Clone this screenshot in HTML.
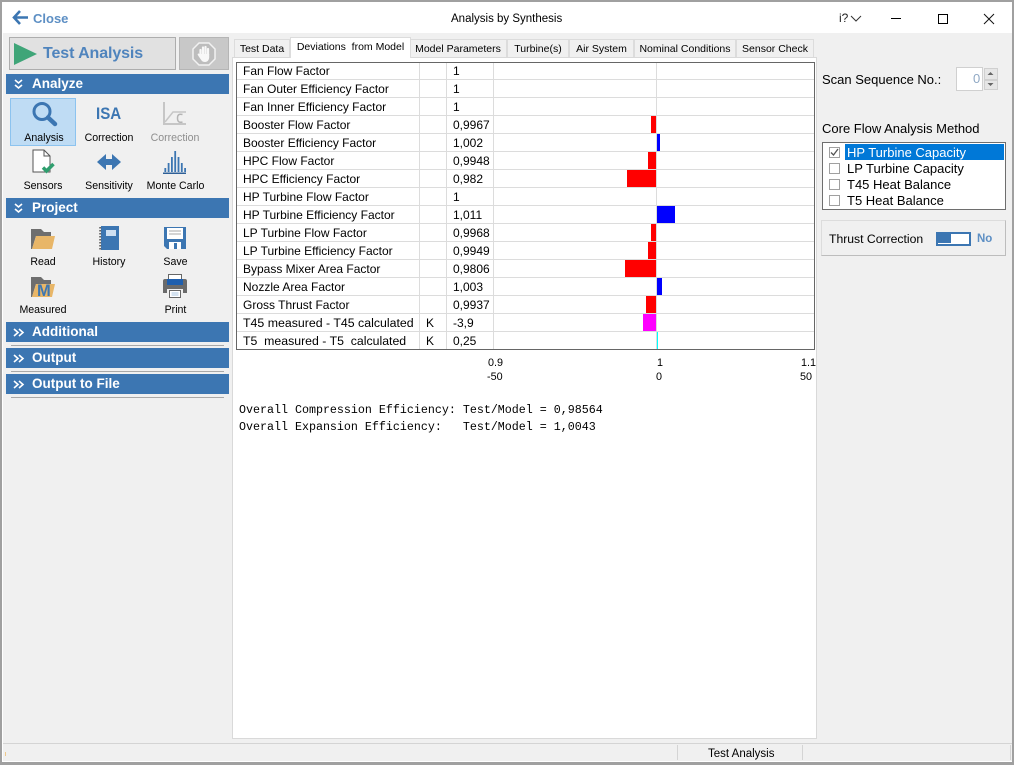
<!DOCTYPE html>
<html><head><meta charset="utf-8"><title>Analysis by Synthesis</title>
<style>
html,body{margin:0;padding:0;width:1014px;height:765px;overflow:hidden;background:#f0f0f0;font-family:"Liberation Sans",sans-serif;font-size:12px;color:#000}
.a,.t,.r,.b,.h,.c,svg{position:absolute}
.a{display:block}
.t{white-space:nowrap;line-height:14px}
.c{white-space:nowrap;line-height:14px;text-align:center;font-size:10.6px}
.h{left:6px;width:223px;height:20px;background:#3c76b2;color:#fff;font-weight:bold;font-size:13.5px;line-height:20px}
.h span{position:absolute;left:26px;top:0}
.h svg{left:7px;top:5px}
.tab{position:absolute;top:39px;height:18px;background:#f0f0f0;border:1px solid #dcdcdc;border-bottom:none;box-sizing:border-box;text-align:center;line-height:18px;font-size:10.5px;white-space:nowrap}
.rl{position:absolute;left:237px;width:577px;height:1px;background:#dcdcdc}
.cl{position:absolute;top:63px;height:286px;width:1px;background:#dcdcdc}
.tx{position:absolute;left:243px;white-space:nowrap;line-height:14px;font-size:12px}
.v{position:absolute;left:453px;white-space:nowrap;line-height:14px;font-size:12px}
.b{height:17px}
.chk{position:absolute;left:829px;width:9px;height:9px;border:1px solid #a0a0a0;background:#fff}
.m{position:absolute;left:239px;font:11.67px/17px "Liberation Mono",monospace;white-space:pre}
.ax{font-size:10.8px}
.l13{font-size:13px}
</style></head><body>
<!-- window -->
<div class="a" style="left:0;top:0;width:1014px;height:765px;box-sizing:border-box;border:2px solid #a0a0a0;border-bottom-width:3px;border-right-width:2px"></div>
<div class="a" style="left:2px;top:2px;width:1010px;height:31px;background:#fff"></div>
<div class="a" style="left:2px;top:33px;width:1px;height:728px;background:#fff"></div>
<div class="a" style="left:2px;top:761px;width:1010px;height:1px;background:#fff"></div>

<!-- title -->
<svg style="left:12px;top:10px" width="17" height="15" viewBox="0 0 17 15"><path d="M8 1L2 7.5L8 14M2 7.5H16" fill="none" stroke="#3c76b2" stroke-width="2.6"/></svg>
<div class="t" style="left:33px;top:12px;font-size:13px;font-weight:bold;color:#5d8fc4">Close</div>
<div class="t" style="left:451px;top:12px;font-size:11.5px">Analysis by Synthesis</div>
<div class="t" style="left:839px;top:11px;font-size:12px;color:#222">i?</div>
<svg style="left:850px;top:15px" width="12" height="8"><path d="M1 1L6 6L11 1" fill="none" stroke="#333" stroke-width="1"/></svg>
<div class="a" style="left:891px;top:18px;width:10px;height:1px;background:#000"></div>
<div class="a" style="left:938px;top:14px;width:8px;height:8px;border:1.3px solid #000"></div>
<svg style="left:983px;top:13px" width="12" height="12"><path d="M1 1L11 11M11 1L1 11" fill="none" stroke="#111" stroke-width="1"/></svg>

<!-- run buttons -->
<div class="a" style="left:9px;top:37px;width:165px;height:31px;background:#e1e1e1;border:1px solid #adadad"></div>
<svg style="left:14px;top:43px" width="24" height="22"><path d="M0 0L23 11L0 22Z" fill="#3fa578"/></svg>
<div class="t" style="left:43px;top:45px;font-size:16px;line-height:18px;font-weight:bold;color:#4f84bd;letter-spacing:-.1px">Test Analysis</div>
<div class="a" style="left:179px;top:37px;width:48px;height:31px;background:#c8c8c8;border:1px solid #b5b5b5"></div>
<svg style="left:192px;top:42px" width="24" height="24" viewBox="0 0 24 24"><path d="M7 1H17L23 7V17L17 23H7L1 17V7Z" fill="#bdbdbd" stroke="#f2f2f2" stroke-width="1.5"/><path d="M8.500 13V8M11 12V5.500M13.500 12V5M16 12.500V7" stroke="#f8f8f8" stroke-width="2.200" stroke-linecap="round" fill="none"/><path d="M7.500 12H17.200V15C17.200 18 15.500 20 13 20C10.500 20 9.500 18.500 8.500 17L5.800 13C5.200 12 6.500 10.800 7.500 12Z" fill="#f8f8f8"/></svg>

<!-- Analyze -->
<div class="h" style="top:74px"><svg width="12" height="11" viewBox="0 0 12 11"><path d="M2 1L5.500 4L9 1M2 6L5.500 9L9 6" fill="none" stroke="#fff" stroke-width="1.6"/></svg><span>Analyze</span></div>
<div class="a" style="left:10px;top:98px;width:64px;height:46px;background:#bfdcf4;border:1px solid #8cc3ef"></div>
<svg style="left:30px;top:100px" width="30" height="28" viewBox="0 0 30 28"><circle cx="12" cy="11.500" r="8" fill="none" stroke="#3c76b2" stroke-width="3"/><path d="M18 17.500L25 24" stroke="#3c76b2" stroke-width="4.500" stroke-linecap="round"/></svg>
<div class="c" style="left:11px;width:66px;top:131px">Analysis</div>
<div class="t" style="left:96px;top:104px;font-size:16.800px;line-height:20px;font-weight:bold;color:#3c76b2;transform:scaleX(.9);transform-origin:0 0">ISA</div>
<div class="c" style="left:76px;width:66px;top:131px">Correction</div>
<svg style="left:160px;top:100px" width="28" height="26" viewBox="0 0 28 26" fill="none" stroke="#c6c6c6" stroke-width="1.500"><path d="M4 2V24H26" stroke-width="2"/><path d="M5 22L13 12H26"/><path d="M22.500 14.500C19 13.500 17.500 15 17.500 18C17.500 21.500 19 23 22.500 22" stroke="#b4b4b4"/></svg>
<div class="c" style="left:142px;width:66px;top:131px;color:#8e8e8e">Correction</div>

<svg style="left:31px;top:149px" width="26" height="26" viewBox="0 0 26 26"><path d="M2 1H13L19 7V23H2Z" fill="#fff" stroke="#555" stroke-width="1"/><path d="M13 1V7H19" fill="none" stroke="#555"/><path d="M12 18.500L15.500 22L22.500 15" fill="none" stroke="#2f9e6e" stroke-width="3.500"/></svg>
<div class="c" style="left:10px;width:66px;top:179px">Sensors</div>
<svg style="left:97px;top:154px" width="24" height="16" viewBox="0 0 24 16"><path d="M0 8L9 0V5H15V0L24 8L15 16V11H9V16Z" fill="#3c76b2"/></svg>
<div class="c" style="left:76px;width:66px;top:179px">Sensitivity</div>
<svg style="left:163px;top:150px" width="24" height="25" viewBox="0 0 24 25"><path d="M0 23.200H23" stroke="#2e5f97" stroke-width="1.500"/><path d="M2.300 22V18M5.600 22V13M8.900 22V7M12.200 22V1M15.500 22V7M18.800 22V13M22.100 22V18" stroke="#3c76b2" stroke-width="1.800"/></svg>
<div class="c" style="left:142px;width:67px;top:179px">Monte Carlo</div>

<!-- Project -->
<div class="h" style="top:198px"><svg width="12" height="11" viewBox="0 0 12 11"><path d="M2 1L5.500 4L9 1M2 6L5.500 9L9 6" fill="none" stroke="#fff" stroke-width="1.600"/></svg><span>Project</span></div>
<svg style="left:31px;top:228px" width="26" height="22" viewBox="0 0 26 22"><path d="M0 1H10L13 4H20V8H5L1 21H0Z" fill="#6e6e6e"/><path d="M5 8H24L21 21H1Z" fill="#e8b668"/></svg>
<div class="c" style="left:10px;width:66px;top:255px">Read</div>
<svg style="left:99px;top:226px" width="20" height="25" viewBox="0 0 20 25"><rect x="2" y="0" width="18" height="24" fill="#3c76b2"/><rect x="7" y="4" width="10" height="6" fill="#cfe0f2"/><path d="M1.200 1V24" stroke="#666" stroke-width="2" stroke-dasharray="1.500 1.500"/></svg>
<div class="c" style="left:76px;width:66px;top:255px">History</div>
<svg style="left:164px;top:227px" width="22" height="23" viewBox="0 0 22 23"><path d="M0 0H22V22H3L0 19Z" fill="#3c76b2"/><rect x="3" y="1" width="16" height="11" fill="#fff"/><path d="M5 4H17M5 7H17" stroke="#a9a9a9"/><rect x="5" y="15" width="12" height="7" fill="#fff"/><rect x="10" y="16" width="3" height="6" fill="#3c76b2"/></svg>
<div class="c" style="left:142px;width:67px;top:255px">Save</div>
<svg style="left:31px;top:276px" width="26" height="22" viewBox="0 0 26 22"><path d="M0 1H10L13 4H20V8H5L1 21H0Z" fill="#6e6e6e"/><path d="M5 8H24L21 21H1Z" fill="#e8b668"/></svg>
<div class="t" style="left:37px;top:282px;font-size:16.500px;line-height:18px;font-weight:bold;color:#3c76b2">M</div>
<div class="c" style="left:10px;width:66px;top:303px">Measured</div>
<svg style="left:163px;top:274px" width="24" height="24" viewBox="0 0 24 24"><rect x="5.500" y="0.500" width="13" height="7" fill="#fff" stroke="#666"/><path d="M2 5H22Q24 5 24 7V19H20V15H4V19H0V7Q0 5 2 5Z" fill="#6b6b6b"/><rect x="4" y="5" width="16" height="6" fill="#1f5fae"/><rect x="6.500" y="16.500" width="11" height="7" fill="#fff" stroke="#666"/><path d="M8.500 19H15.500M8.500 21H15.500" stroke="#a9c4e0"/></svg>
<div class="c" style="left:142px;width:67px;top:303px">Print</div>

<!-- collapsed -->
<div class="h" style="top:322px"><svg width="12" height="11" viewBox="0 0 12 11"><path d="M1 2L5 5.500L1 9M6 2L10 5.500L6 9" fill="none" stroke="#fff" stroke-width="1.600"/></svg><span>Additional</span></div>
<div class="a" style="left:11px;top:345px;width:213px;height:1px;background:#a8a8a8"></div>
<div class="h" style="top:348px"><svg width="12" height="11" viewBox="0 0 12 11"><path d="M1 2L5 5.500L1 9M6 2L10 5.500L6 9" fill="none" stroke="#fff" stroke-width="1.600"/></svg><span>Output</span></div>
<div class="a" style="left:11px;top:371px;width:213px;height:1px;background:#a8a8a8"></div>
<div class="h" style="top:374px"><svg width="12" height="11" viewBox="0 0 12 11"><path d="M1 2L5 5.500L1 9M6 2L10 5.500L6 9" fill="none" stroke="#fff" stroke-width="1.600"/></svg><span>Output to File</span></div>
<div class="a" style="left:11px;top:397px;width:213px;height:1px;background:#a8a8a8"></div>

<!-- panel -->
<div class="a" style="left:232px;top:57px;width:583px;height:680px;background:#fff;border:1px solid #d9d9d9"></div>
<div class="tab" style="left:234px;width:56px">Test Data</div>
<div class="tab" style="left:409px;width:98px">Model Parameters</div>
<div class="tab" style="left:507px;width:62px">Turbine(s)</div>
<div class="tab" style="left:569px;width:65px">Air System</div>
<div class="tab" style="left:634px;width:102px">Nominal Conditions</div>
<div class="tab" style="left:736px;width:78px">Sensor Check</div>
<div class="tab" style="left:290px;top:37px;width:121px;height:21px;background:#fff;line-height:18px;z-index:2">Deviations&nbsp; from Model</div>

<!-- table -->
<div class="a" style="left:236px;top:62px;width:577px;height:286px;border:1px solid #666"></div>
<div class="rl" style="top:79px"></div><div class="rl" style="top:97px"></div><div class="rl" style="top:115px"></div><div class="rl" style="top:133px"></div><div class="rl" style="top:151px"></div><div class="rl" style="top:169px"></div><div class="rl" style="top:187px"></div><div class="rl" style="top:205px"></div><div class="rl" style="top:223px"></div><div class="rl" style="top:241px"></div><div class="rl" style="top:259px"></div><div class="rl" style="top:277px"></div><div class="rl" style="top:295px"></div><div class="rl" style="top:313px"></div><div class="rl" style="top:331px"></div>
<div class="cl" style="left:419px"></div><div class="cl" style="left:446px"></div><div class="cl" style="left:493px"></div><div class="cl" style="left:656px"></div>

<div class="b a" style="left:651px;top:116px;width:5px;background:#f00"></div>
<div class="b a" style="left:657px;top:134px;width:3px;background:#00f"></div>
<div class="b a" style="left:648px;top:152px;width:8px;background:#f00"></div>
<div class="b a" style="left:627px;top:170px;width:29px;background:#f00"></div>
<div class="b a" style="left:657px;top:206px;width:18px;background:#00f"></div>
<div class="b a" style="left:651px;top:224px;width:5px;background:#f00"></div>
<div class="b a" style="left:648px;top:242px;width:8px;background:#f00"></div>
<div class="b a" style="left:625px;top:260px;width:31px;background:#f00"></div>
<div class="b a" style="left:657px;top:278px;width:5px;background:#00f"></div>
<div class="b a" style="left:646px;top:296px;width:10px;background:#f00"></div>
<div class="b a" style="left:643px;top:314px;width:13px;background:#f0f"></div>
<div class="b a" style="left:657px;top:332px;width:1px;background:#0ff"></div>

<div class="tx" style="top:64px">Fan Flow Factor</div><div class="v" style="top:64px">1</div>
<div class="tx" style="top:82px">Fan Outer Efficiency Factor</div><div class="v" style="top:82px">1</div>
<div class="tx" style="top:100px">Fan Inner Efficiency Factor</div><div class="v" style="top:100px">1</div>
<div class="tx" style="top:118px">Booster Flow Factor</div><div class="v" style="top:118px">0,9967</div>
<div class="tx" style="top:136px">Booster Efficiency Factor</div><div class="v" style="top:136px">1,002</div>
<div class="tx" style="top:154px">HPC Flow Factor</div><div class="v" style="top:154px">0,9948</div>
<div class="tx" style="top:172px">HPC Efficiency Factor</div><div class="v" style="top:172px">0,982</div>
<div class="tx" style="top:190px">HP Turbine Flow Factor</div><div class="v" style="top:190px">1</div>
<div class="tx" style="top:208px">HP Turbine Efficiency Factor</div><div class="v" style="top:208px">1,011</div>
<div class="tx" style="top:226px">LP Turbine Flow Factor</div><div class="v" style="top:226px">0,9968</div>
<div class="tx" style="top:244px">LP Turbine Efficiency Factor</div><div class="v" style="top:244px">0,9949</div>
<div class="tx" style="top:262px">Bypass Mixer Area Factor</div><div class="v" style="top:262px">0,9806</div>
<div class="tx" style="top:280px">Nozzle Area Factor</div><div class="v" style="top:280px">1,003</div>
<div class="tx" style="top:298px">Gross Thrust Factor</div><div class="v" style="top:298px">0,9937</div>
<div class="tx" style="top:316px;font-size:12.350px">T45 measured - T45 calculated</div><div class="t" style="left:426px;top:316px">K</div><div class="v" style="top:316px">-3,9</div>
<div class="tx" style="top:334px;font-size:12.300px">T5&nbsp; measured - T5&nbsp; calculated</div><div class="t" style="left:426px;top:334px">K</div><div class="v" style="top:334px">0,25</div>

<div class="t ax" style="left:488px;top:356px">0.9</div>
<div class="t ax" style="left:487px;top:370px">-50</div>
<div class="t ax" style="left:657px;top:356px">1</div>
<div class="t ax" style="left:656px;top:370px">0</div>
<div class="t ax" style="left:801px;top:356px">1.1</div>
<div class="t ax" style="left:800px;top:370px">50</div>

<div class="m" style="top:402px">Overall Compression Efficiency: Test/Model = 0,98564</div>
<div class="m" style="top:419px">Overall Expansion Efficiency:   Test/Model = 1,0043</div>

<!-- right -->
<div class="t l13" style="left:822px;top:73px">Scan Sequence No.:</div>
<div class="a" style="left:956px;top:67px;width:25px;height:22px;background:#fff;border:1px solid #d0d0d0"></div>
<div class="t l13" style="left:973px;top:72px;color:#8fa8c4">0</div>
<div class="a" style="left:984px;top:68px;width:12px;height:10px;background:#e6e6e6;border:1px solid #d0d0d0"></div>
<div class="a" style="left:984px;top:80px;width:12px;height:8px;background:#e6e6e6;border:1px solid #d0d0d0"></div>
<svg style="left:986px;top:71px" width="9" height="16"><path d="M1.500 4L4.500 1L7.500 4ZM1.500 12H7.500L4.500 15Z" fill="#666"/></svg>
<div class="t l13" style="left:822px;top:122px">Core Flow Analysis Method</div>
<div class="a" style="left:822px;top:142px;width:182px;height:66px;background:#fff;border:1px solid #6e6e6e"></div>
<div class="a" style="left:845px;top:144px;width:159px;height:16px;background:#0078d7"></div>
<div class="chk" style="top:147px"></div><svg style="left:830px;top:148px" width="10" height="10"><path d="M1 4.500L3.500 7L8 1" fill="none" stroke="#555" stroke-width="1.300"/></svg>
<div class="chk" style="top:163px"></div><div class="chk" style="top:179px"></div><div class="chk" style="top:195px"></div>
<div class="t l13" style="left:847px;top:146px;color:#fff">HP Turbine Capacity</div>
<div class="t l13" style="left:847px;top:162px">LP Turbine Capacity</div>
<div class="t l13" style="left:847px;top:178px">T45 Heat Balance</div>
<div class="t l13" style="left:847px;top:194px">T5 Heat Balance</div>

<div class="a" style="left:821px;top:220px;width:183px;height:34px;background:#f0f0f0;border:1px solid #dcdcdc;border-right-color:#bdbdbd;border-bottom-color:#bdbdbd"></div>
<div class="t" style="left:829px;top:232px;font-size:12.200px">Thrust Correction</div>
<div class="a" style="left:936px;top:232px;width:31px;height:10px;background:#fff;border:2px solid #3c76b2"></div>
<div class="a" style="left:938px;top:234px;width:13px;height:9px;background:#3c76b2"></div>
<div class="t" style="left:977px;top:232px;font-size:11.500px;font-weight:bold;color:#5d8fc4">No</div>

<!-- status -->
<div class="a" style="left:3px;top:743px;width:1009px;height:1px;background:#d4d4d4"></div>
<div class="a" style="left:5px;top:752px;width:1px;height:4px;background:#efc88a"></div>
<div class="a" style="left:677px;top:745px;width:1px;height:15px;background:#d4d4d4"></div>
<div class="a" style="left:802px;top:745px;width:1px;height:15px;background:#d4d4d4"></div>
<div class="a" style="left:1010px;top:745px;width:1px;height:15px;background:#d4d4d4"></div>
<div class="t" style="left:708px;top:747px;font-size:11.500px">Test Analysis</div>
</body></html>
